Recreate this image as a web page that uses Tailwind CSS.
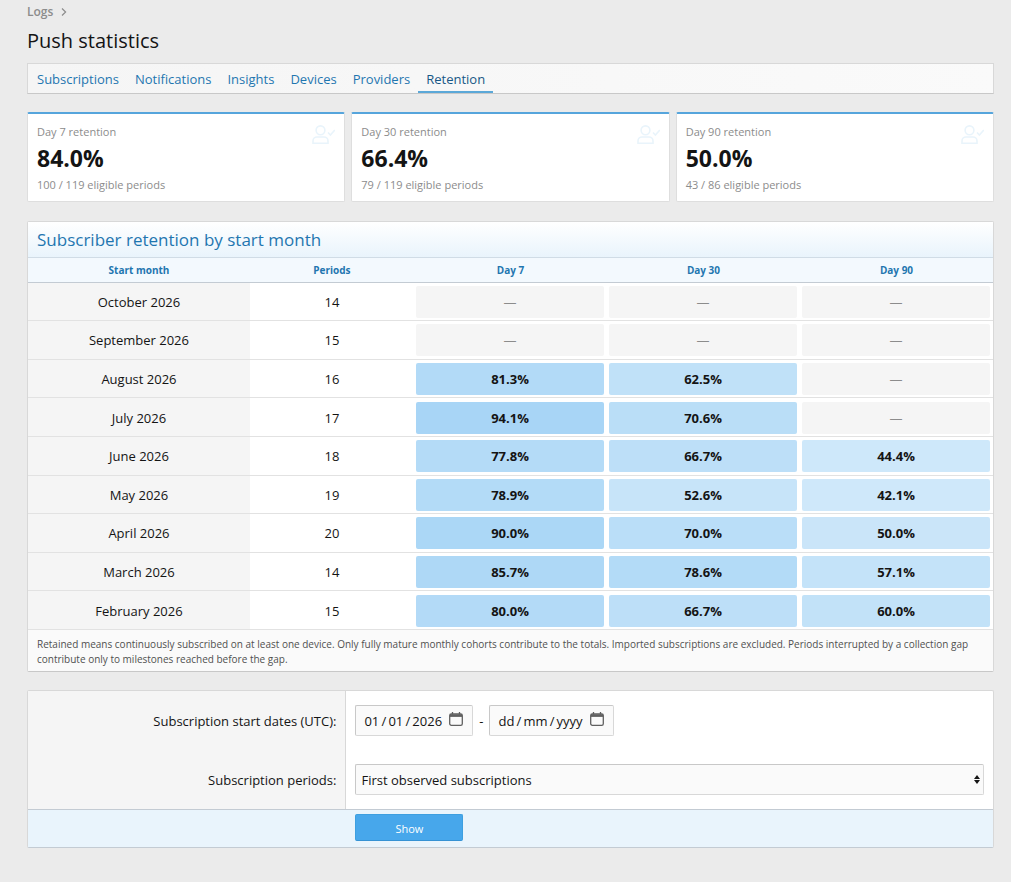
<!DOCTYPE html>
<html lang="en">
<head>
  <meta charset="UTF-8">
  <meta name="viewport" content="width=device-width, initial-scale=1.0">
  <title>Push statistics</title>
  <script src="https://cdn.jsdelivr.net/npm/@tailwindcss/browser@4"></script>
</head>
<body class="min-h-screen bg-[#ebebeb] font-['Segoe_UI','Open_Sans',sans-serif] text-[13px] leading-5 text-[#141414]">
  <main class="pl-[27px] pr-[17px] pb-8">
    <nav class="flex items-center gap-2 pt-1 text-[12px] leading-4 font-semibold text-[#8c8c8c]">
      <a href="#">Logs</a>
      <svg class="w-[6px] h-[8px]" viewBox="0 0 6 8" fill="none" stroke="currentColor" stroke-width="1.2"><path d="M1 .5 4.6 4 1 7.5"/></svg>
    </nav>
    <h1 class="mt-[9px] text-[20px] leading-6">Push statistics</h1>

    <nav class="mt-[10px] flex h-[31px] border border-[#d8d8d8] border-b-[#c8c8c8] bg-linear-to-r from-[#f5f5f5] to-[#fafafa] pl-px text-[#1f76b0]">
      <a href="#" class="px-2 pt-[5px]">Subscriptions</a>
      <a href="#" class="px-2 pt-[5px]">Notifications</a>
      <a href="#" class="px-2 pt-[5px]">Insights</a>
      <a href="#" class="px-2 pt-[5px]">Devices</a>
      <a href="#" class="px-2 pt-[5px]">Providers</a>
      <a href="#" class="border-b-2 border-[#5ba8d8] px-2 pt-[5px] text-[#185886]">Retention</a>
    </nav>

    <section id="cards" class="mt-[18px] grid grid-cols-3 gap-[6px]"></section>

    <section class="mt-[19px] rounded-xs border border-[#d8d8d8] border-b-[#c8c8c8] bg-white">
      <h2 class="border-b border-[#d0dce6] bg-linear-to-b from-white to-[#e9f4fc] px-[9px] pt-[6px] pb-[5px] text-[17px] leading-6 text-[#1f76b0]">Subscriber retention by start month</h2>
      <table class="h-[372px] w-full table-fixed text-center">
        <thead>
          <tr class="h-[24px] border-b border-[#c3cbd3] bg-[#f3f9fe] text-[10px] leading-4 text-[#1f76b0]">
            <th class="w-[23%]">Start month</th>
            <th class="w-[17%]">Periods</th>
            <th class="w-[20%]">Day 7</th>
            <th class="w-[20%]">Day 30</th>
            <th class="w-[20%]">Day 90</th>
          </tr>
        </thead>
        <tbody id="rows"></tbody>
      </table>
      <p class="bg-[#fafafa] px-[9px] pt-[7px] pb-1 text-[10px] leading-[15px] text-[#505050]">Retained means continuously subscribed on at least one device. Only fully mature monthly cohorts contribute to the totals. Imported subscriptions are excluded. Periods interrupted by a collection gap contribute only to milestones reached before the gap.</p>
    </section>

    <form class="mt-[18px] rounded-xs border border-[#d8d8d8] border-b-[#c3cbd3] bg-white">
      <div class="flex">
        <div class="w-[33%] border-r border-[#d8d8d8] bg-[#f5f5f5] pt-5 pb-[19px] pr-[9px] text-right">
          <label for="start">Subscription start dates (UTC):</label>
        </div>
        <div class="flex flex-1 items-center px-[9px] py-[14px]">
          <div class="relative">
            <input id="start" type="text" value="01&thinsp;/&thinsp;01&thinsp;/&thinsp;2026" class="block h-[31px] w-[118px] rounded-xs border border-[#d8d8d8] border-t-[#c8c8c8] border-l-[#c8c8c8] bg-[#fafafa] pl-2">
            <button type="button" aria-label="Pick start date" class="absolute top-[7px] right-[10px]">
              <svg class="h-[14px] w-[14px]" viewBox="0 0 14 14" fill="none" stroke="#606060" stroke-width="1.3"><rect x=".7" y="2" width="12.6" height="11.3" rx="1.6"/><path d="M1 3.6h12" stroke-width="2.6"/><path d="M3.5 0v2.5M10.5 0v2.5"/></svg>
            </button>
          </div>
          <span class="w-4 text-center">-</span>
          <div class="relative">
            <input type="text" aria-label="Subscription end date" placeholder="dd&thinsp;/&thinsp;mm&thinsp;/&thinsp;yyyy" class="block h-[31px] w-[125px] rounded-xs border border-[#d8d8d8] border-t-[#c8c8c8] border-l-[#c8c8c8] bg-[#fafafa] pl-2 placeholder:text-[#141414]">
            <button type="button" aria-label="Pick end date" class="absolute top-[7px] right-[10px]">
              <svg class="h-[14px] w-[14px]" viewBox="0 0 14 14" fill="none" stroke="#606060" stroke-width="1.3"><rect x=".7" y="2" width="12.6" height="11.3" rx="1.6"/><path d="M1 3.6h12" stroke-width="2.6"/><path d="M3.5 0v2.5M10.5 0v2.5"/></svg>
            </button>
          </div>
        </div>
      </div>
      <div class="flex">
        <div class="w-[33%] border-r border-[#d8d8d8] bg-[#f5f5f5] pt-5 pb-[19px] pr-[9px] text-right">
          <label for="periods">Subscription periods:</label>
        </div>
        <div class="relative flex-1 px-[9px] py-[14px]">
          <select id="periods" class="block h-[31px] w-full appearance-none rounded-xs border border-[#d8d8d8] border-t-[#c8c8c8] border-l-[#c8c8c8] bg-[#fafafa] px-[5px]">
            <option>First observed subscriptions</option>
          </select>
          <svg class="pointer-events-none absolute top-[25px] right-[13px] h-[9px] w-[6px]" viewBox="0 0 6 9" fill="#141414"><path d="M3 0 6 4H0zM3 9 0 5h6z"/></svg>
        </div>
      </div>
      <div class="flex border-t border-[#c3cbd3] bg-[#e9f4fc] pt-1 pb-[6px]">
        <div class="w-[33%]"></div>
        <button type="submit" class="ml-[9px] h-[27px] w-[108px] rounded-xs border border-[#3d9fe0] border-b-[#3592d4] bg-[#47a7eb] pt-[2px] text-[11px] leading-4 text-white">Show</button>
      </div>
    </form>
  </main>

  <script>
    const cards = [
      ['Day 7 retention', '84.0%', '100 / 119 eligible periods'],
      ['Day 30 retention', '66.4%', '79 / 119 eligible periods'],
      ['Day 90 retention', '50.0%', '43 / 86 eligible periods'],
    ];

    document.getElementById('cards').innerHTML = cards.map(([title, value, note]) => `
      <div class="relative rounded-xs border border-t-2 border-[#dedede] border-t-[#56a5dc] bg-white px-[9px] pt-[9px] pb-[7px] text-[11px] leading-[18px] text-[#8c8c8c]">
        <p>${title}</p>
        <p class="mt-px mb-[2px] text-[23px] leading-8 font-bold text-[#141414]">${value}</p>
        <p>${note}</p>
        <svg class="absolute top-[11px] right-[9px] h-[19px] w-[23px]" viewBox="0 0 23 19" fill="none" stroke="#e9f4fb" stroke-width="1.6"><circle cx="8.5" cy="5.3" r="4.4"/><path d="M1 18.2v-2.2a4 4 0 0 1 4-4h7a4 4 0 0 1 4 4v2.2zM16 7.5l2.4 2.6 4.4-5"/></svg>
      </div>`).join('');

    const cohorts = [
      ['October 2026', 14, []],
      ['September 2026', 15, []],
      ['August 2026', 16, [81.3, 62.5]],
      ['July 2026', 17, [94.1, 70.6]],
      ['June 2026', 18, [77.8, 66.7, 44.4]],
      ['May 2026', 19, [78.9, 52.6, 42.1]],
      ['April 2026', 20, [90.0, 70.0, 50.0]],
      ['March 2026', 14, [85.7, 78.6, 57.1]],
      ['February 2026', 15, [80.0, 66.7, 60.0]],
    ];

    // the higher the retention, the stronger the blue
    const cell = (value) => value === undefined
      ? '<td class="pt-px"><div class="mr-[3px] ml-[2px] h-8 rounded-xs bg-[#f5f5f5] leading-8 text-[#8c8c8c]">—</div></td>'
      : `<td class="pt-px"><div class="mr-[3px] ml-[2px] h-8 rounded-xs leading-8 font-bold" style="background: rgba(71, 167, 235, ${(0.08 + value * 0.0042).toFixed(3)})">${value.toFixed(1)}%</div></td>`;

    document.getElementById('rows').innerHTML = cohorts.map(([month, periods, days]) => `
      <tr class="border-b border-[#e2e2e2]">
        <td class="bg-[#f5f5f5] pt-px">${month}</td>
        <td class="pt-px">${periods}</td>
        ${[0, 1, 2].map((i) => cell(days[i])).join('')}
      </tr>`).join('');
  </script>
</body>
</html>
